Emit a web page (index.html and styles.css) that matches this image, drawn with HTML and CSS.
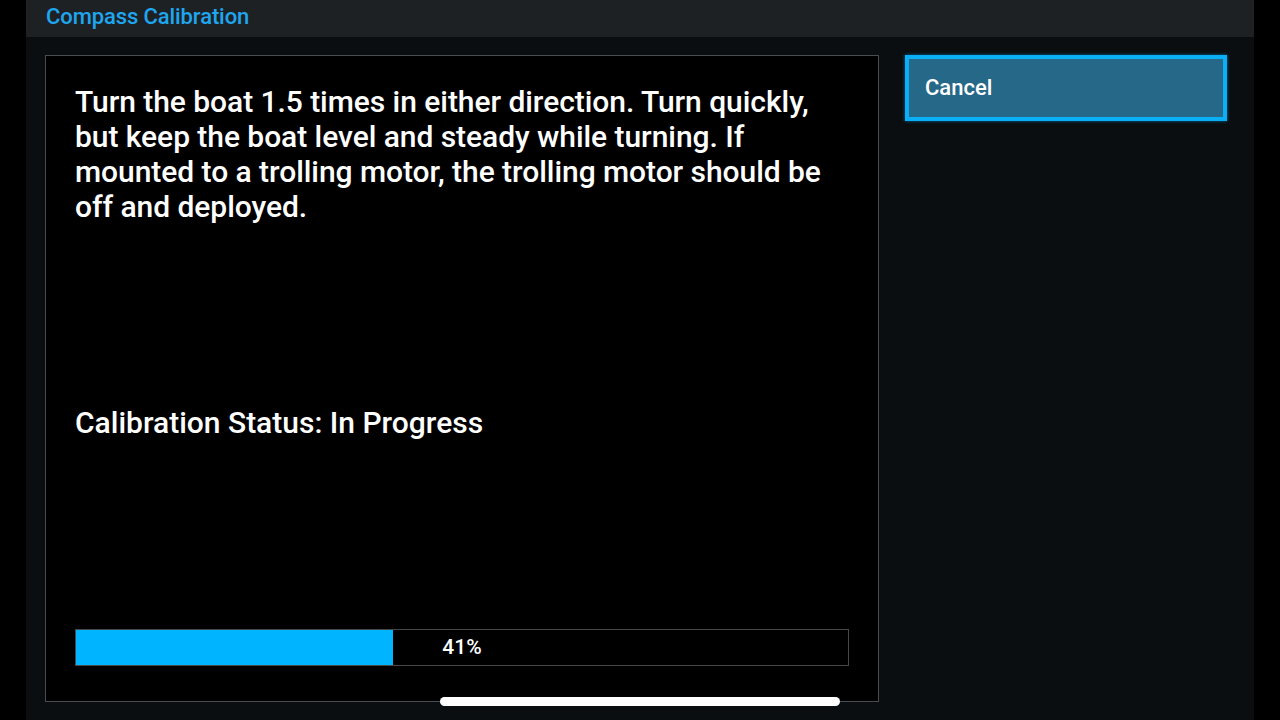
FILE: index.html
```html
<!DOCTYPE html>
<html lang="en">
<head>
    <meta charset="UTF-8">
    <meta name="viewport" content="width=device-width, initial-scale=1.0">
    <title>Compass Calibration</title>
    <link rel="stylesheet" href="styles.css">
</head>
<body>

<div class="screen">
    <div class="title-bar">
        <h1>Compass Calibration</h1>
    </div>

    <div class="content">
        <div class="panel">
            <p class="instructions">Turn the boat 1.5 times in either direction. Turn quickly, but keep the boat level and steady while turning. If mounted to a trolling motor, the trolling motor should be off and deployed.</p>

            <p class="status">Calibration Status: In Progress</p>

            <div class="progress">
                <div class="progress-fill" style="width: 41%;"></div>
                <span class="progress-label">41%</span>
            </div>
        </div>

        <div class="actions">
            <button class="btn selected">Cancel</button>
        </div>
    </div>
</div>

<!-- system gesture bar -->
<div class="home-indicator"></div>

</body>
</html>
```

FILE: styles.css
```css
html, body {
    margin: 0;
    padding: 0;
    height: 100%;
}
body {
    font-family: Roboto, "Liberation Sans", sans-serif;
    background-color: #000;
    color: #fff;
    overflow: hidden;
    position: relative;
}
.screen {
    width: 1228px;
    height: 720px;
    margin-left: 26px;
    background-color: #0a0e11;
    display: flex;
    flex-direction: column;
}
.title-bar {
    height: 37px;
    background-color: #1e2124;
    padding-left: 20px;
    display: flex;
    align-items: center;
}
.title-bar h1 {
    margin: 0;
    font-size: 22px;
    font-weight: 500;
    letter-spacing: -0.1px;
    color: #1ea6ee;
    margin-top: -4px;
}
.content {
    flex: 1;
    display: flex;
    padding: 18px 27px 18px 19px;
    gap: 26px;
}
.panel {
    width: 774px;
    background-color: #000;
    border: 1px solid #4a4d50;
    padding: 28px 29px 35px 29px;
    display: flex;
    flex-direction: column;
}
.instructions {
    margin: 0;
    font-size: 30px;
    font-weight: 500;
    letter-spacing: -0.05px;
    line-height: 35px;
    padding-right: 10px;
}
.status {
    margin: 181px 0 0 0;
    font-size: 30px;
    font-weight: 500;
    line-height: 35px;
}
.progress {
    margin-top: auto;
    height: 35px;
    border: 1px solid #46494c;
    position: relative;
}
.progress-fill {
    height: 100%;
    background-color: #00b4ff;
}
.progress-label {
    position: absolute;
    left: 0;
    right: 0;
    top: 0;
    line-height: 35px;
    text-align: center;
    font-size: 21px;
    font-weight: 500;
}
.actions {
    flex: 1;
}
.btn {
    width: 100%;
    height: 66px;
    padding: 0 16px 2px 16px;
    text-align: left;
    font-family: inherit;
    font-size: 22px;
    font-weight: 500;
    color: #fff;
    background-color: #266888;
    border: 4px solid #0aaff5;
    box-shadow: 0 0 3px rgba(0, 176, 248, 0.6);
    cursor: pointer;
}
.home-indicator {
    position: absolute;
    left: 440px;
    top: 697px;
    width: 400px;
    height: 9px;
    border-radius: 5px;
    background-color: #fff;
}
```
